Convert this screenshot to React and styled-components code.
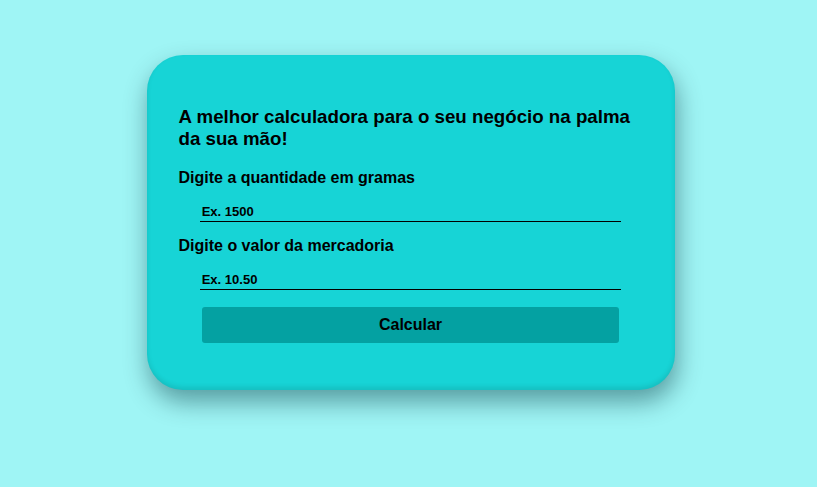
import React from "react";
import styled, { createGlobalStyle } from "styled-components";

const GlobalStyle = createGlobalStyle`
  body {
    margin: 0;
    background-color: #9ff5f5;
    font-family: "Liberation Sans", Arial, sans-serif;
  }
`;

const Page = styled.main`
  display: flex;
  justify-content: center;
  align-items: flex-start;
  padding-top: 55px;
  padding-left: 4px;
  min-height: 487px;
  box-sizing: border-box;
`;

const Card = styled.form`
  width: 528px;
  box-sizing: border-box;
  padding: 32px;
  border-radius: 36px;
  background-color: #17d4d6;
  box-shadow: 2px 12px 24px rgba(0, 50, 60, 0.45),
    inset 0 -3px 5px rgba(0, 0, 0, 0.1);
  display: flex;
  flex-direction: column;
`;

const Title = styled.h3`
  font-size: 18.72px;
  font-weight: bold;
  margin: 18.72px 0 19.72px;
  color: #000;
`;

const Label = styled.label`
  font-size: 16px;
  font-weight: bold;
  color: #000;
`;

const Input = styled.input`
  align-self: center;
  width: 90%;
  margin: 16px 0 15px;
  padding: 1px 2px 2px;
  border: none;
  border-bottom: 1px solid #000;
  background: transparent;
  font-family: "Liberation Sans", Arial, sans-serif;
  font-size: 13px;
  font-weight: bold;
  color: #000;
  outline: none;

  &::placeholder {
    color: #000;
    opacity: 1;
  }
`;

const Button = styled.button`
  align-self: center;
  width: 90%;
  height: 36px;
  margin-top: 2px;
  margin-bottom: 15px;
  border: none;
  border-radius: 3px;
  background-color: #04a1a2;
  font-family: "Liberation Sans", Arial, sans-serif;
  font-size: 16px;
  font-weight: bold;
  color: #000;
  cursor: pointer;
`;

export default function App() {
  return (
    <>
      <GlobalStyle />
      <Page>
        <Card onSubmit={e => e.preventDefault()}>
          <Title>A melhor calculadora para o seu negócio na palma da sua mão!</Title>
          <Label htmlFor="gramas">Digite a quantidade em gramas</Label>
          <Input id="gramas" type="text" placeholder="Ex. 1500" />
          <Label htmlFor="valor">Digite o valor da mercadoria</Label>
          <Input id="valor" type="text" placeholder="Ex. 10.50" />
          <Button type="submit">Calcular</Button>
        </Card>
      </Page>
    </>
  );
}
